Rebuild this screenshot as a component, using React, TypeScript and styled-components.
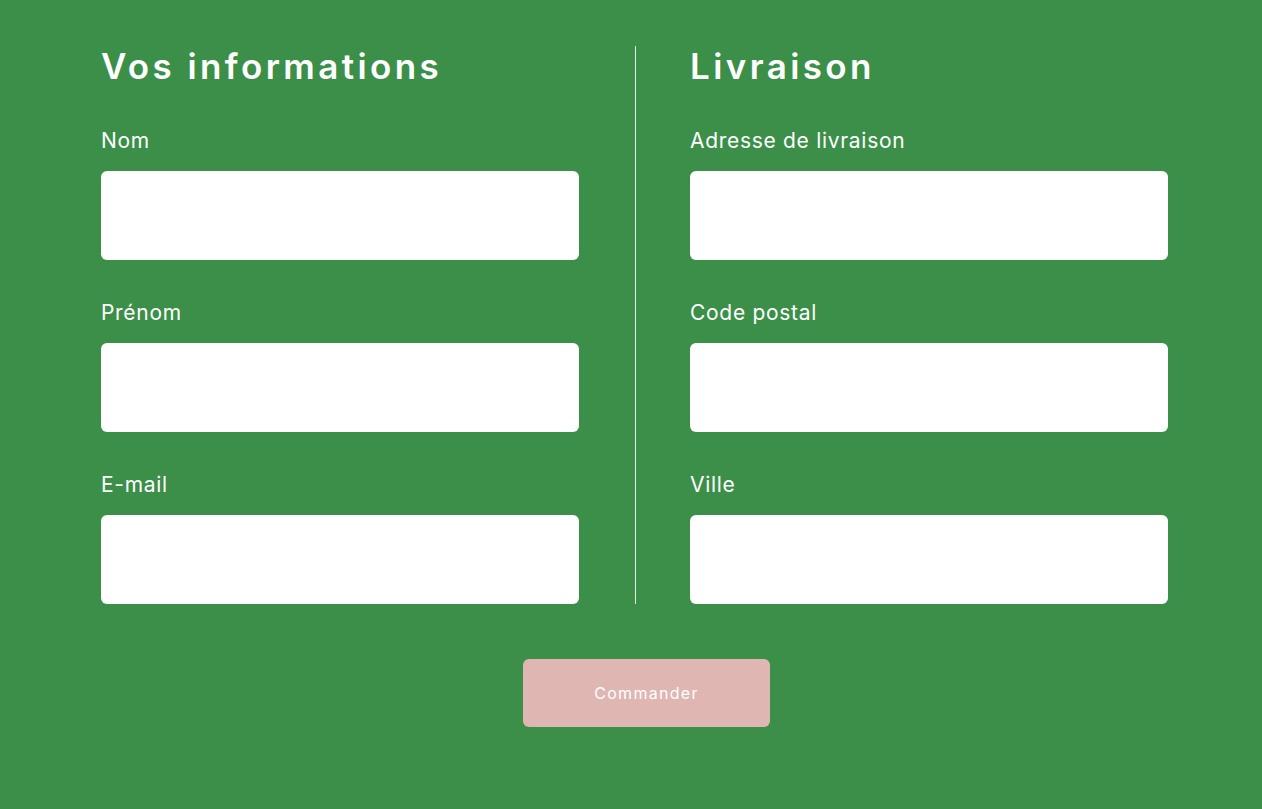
import styled, { createGlobalStyle } from "styled-components";

const GlobalStyle = createGlobalStyle`
  html, body {
    margin: 0;
    padding: 0;
    background: #3b8f48;
  }
  * { box-sizing: border-box; }
`;

const fields = {
  left: { title: "Vos informations", labels: ["Nom", "Prénom", "E-mail"] },
  right: { title: "Livraison", labels: ["Adresse de livraison", "Code postal", "Ville"] },
};

const Column = ({ title, labels }: { title: string; labels: string[] }) => (
  <FormColumn>
    <Title>{title}</Title>
    {labels.map((label) => (
      <Field key={label}>
        <Label>{label}</Label>
        <Input type="text" />
      </Field>
    ))}
  </FormColumn>
);

const App: React.FC = () => {
  return (
    <Page>
      <GlobalStyle />
      <Columns>
        <Column {...fields.left} />
        <Divider />
        <Column {...fields.right} />
      </Columns>
      <SubmitButton type="button">Commander</SubmitButton>
    </Page>
  );
};

const Page = styled.div`
  width: 100%;
  min-height: 809px;
  background: #3b8f48;
  padding: 46px 0 0 101px;
  display: flex;
  flex-direction: column;
  font-family: Inter, "Open Sans", sans-serif;
`;

const Columns = styled.div`
  display: flex;
  align-items: stretch;
`;

const FormColumn = styled.div`
  width: 478px;
  display: flex;
  flex-direction: column;
`;

const Divider = styled.div`
  width: 1px;
  background: rgba(255, 255, 255, 0.85);
  margin: 0 54px 0 56px;
`;

const Title = styled.h2`
  margin: 0;
  height: 40px;
  color: #fff;
  font-family: Inter, sans-serif;
  font-size: 35px;
  font-weight: 600;
  line-height: 40px;
  letter-spacing: 3.4px;
`;

const Field = styled.div`
  display: flex;
  flex-direction: column;
  margin-top: 41px;

  & + & {
    margin-top: 39px;
  }
`;

const Label = styled.label`
  color: #fff;
  font-family: Inter, sans-serif;
  font-size: 21px;
  font-weight: 400;
  line-height: 28px;
  height: 28px;
  margin-bottom: 16px;
  letter-spacing: 0.7px;
`;

const Input = styled.input`
  width: 478px;
  height: 89px;
  border: none;
  border-radius: 6px;
  background: #fff;
  outline: none;
`;

const SubmitButton = styled.button`
  align-self: flex-start;
  margin: 55px 0 0 422px;
  width: 247px;
  height: 68px;
  border: none;
  border-radius: 6px;
  background: #dfb6b2;
  color: #fff;
  font-family: Inter, sans-serif;
  font-size: 16px;
  font-weight: 400;
  letter-spacing: 1.3px;
`;

export default App;
